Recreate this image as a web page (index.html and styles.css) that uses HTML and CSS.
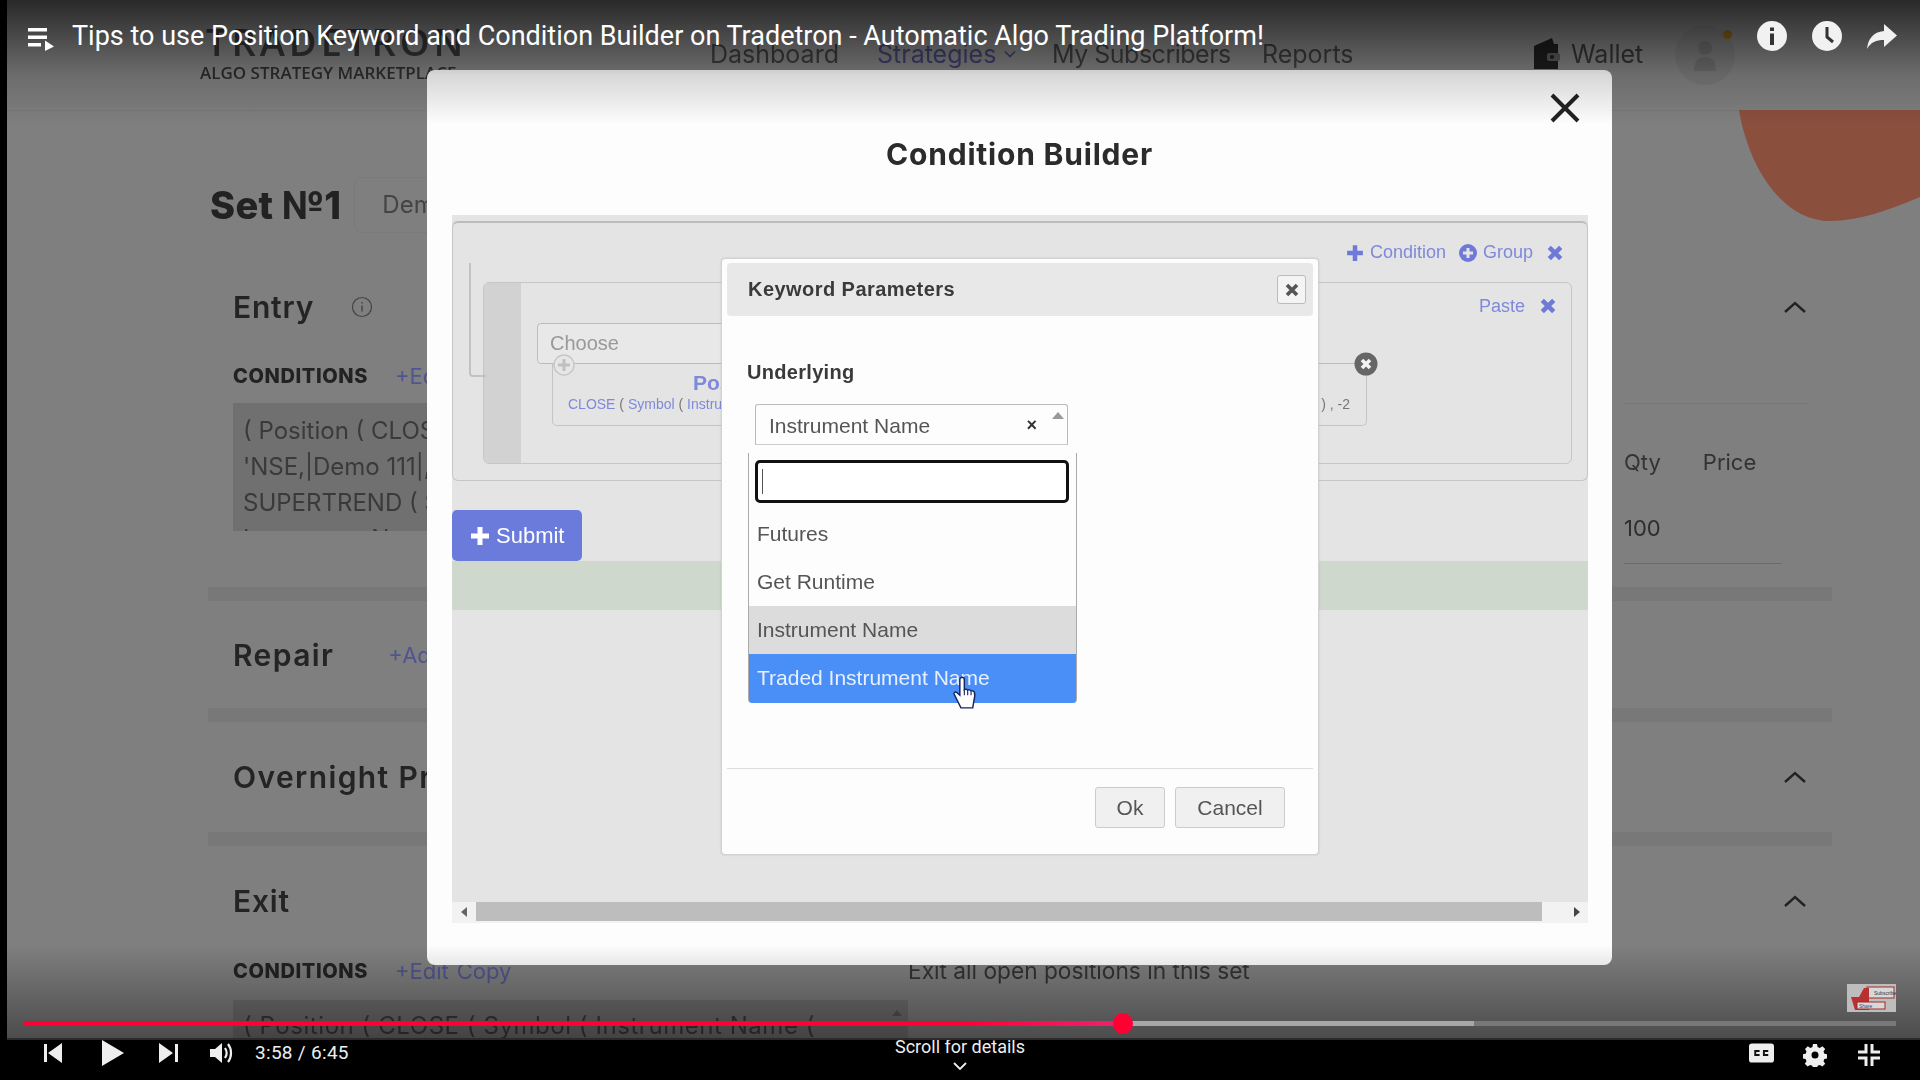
FILE: index.html
```html
<!DOCTYPE html>
<html lang="en">
<head>
<meta charset="utf-8">
<title>Tips to use Position Keyword and Condition Builder on Tradetron</title>
<link rel="stylesheet" href="styles.css">
</head>
<body>
<div class="player">
  <div class="stage">
    <div class="page">
      <header class="site-head">
        <div class="logo">
          <div class="logo-name">TRADETRON</div>
          <div class="logo-sub">ALGO STRATEGY MARKETPLACE</div>
        </div>
        <nav class="nav">
          <span>Dashboard</span>
          <span class="nav-active">Strategies <svg class="nav-chev" viewBox="0 0 12 8"><path d="M1 1.5l5 5 5-5" fill="none" stroke="#3d3f6e" stroke-width="1.6"/></svg></span>
          <span class="nav-subs">My Subscribers</span>
          <span>Reports</span>
        </nav>
        <div class="wallet">
          <svg class="wallet-ico" viewBox="0 0 28 34"><path d="M2 9L20 1l2 6h4v25H2z" fill="#1c1c1c"/><rect x="15" y="16" width="13" height="8" rx="2" fill="#555"/><circle cx="20" cy="20" r="2" fill="#1c1c1c"/></svg>
          <span>Wallet</span>
        </div>
        <div class="avatar">
          <svg viewBox="0 0 60 60"><circle cx="30" cy="23" r="7" fill="#6b6b6b"/><path d="M19 46c0-10 4-14 11-14s11 4 11 14z" fill="#6b6b6b"/></svg>
          <i class="avatar-dot"></i>
        </div>
      </header>
      <div class="set-row">
        <h2 class="set-title">Set №1</h2>
        <div class="set-input">Demo</div>
      </div>
      <section class="card card-entry">
        <div class="card-head"><h3>Entry</h3>
          <svg class="info" viewBox="0 0 22 22"><circle cx="11" cy="11" r="9.5" fill="none" stroke="#444" stroke-width="1.2"/><path d="M11 9.5v6M11 6v1.6" stroke="#444" stroke-width="1.4"/></svg>
          <svg class="chev" viewBox="0 0 24 14"><path d="M2 12L12 3l10 9" fill="none" stroke="#222" stroke-width="2.4"/></svg>
        </div>
        <div class="card-body">
          <div class="cond-col">
            <div class="cond-label"><b>CONDITIONS</b><span>+Edit</span><span>Copy</span></div>
            <div class="cond-box">( Position ( CLOSE ( Symbol (<br>'NSE,|Demo 111|,,,,,<br>SUPERTREND ( Symbol (<br>Instrument Name</div>
          </div>
          <div class="legs">
            <div class="legs-row"><span>Qty</span><span>Price</span></div>
            <div class="legs-val">100</div>
          </div>
        </div>
      </section>
      <section class="card card-repair">
        <div class="card-head head-fill"><h3>Repair</h3><span class="add">+Add</span></div>
      </section>
      <section class="card card-over">
        <div class="card-head head-over"><h3>Overnight Protection</h3>
          <svg class="chev" viewBox="0 0 24 14"><path d="M2 12L12 3l10 9" fill="none" stroke="#222" stroke-width="2.4"/></svg>
        </div>
      </section>
      <section class="card card-exit">
        <div class="card-head"><h3>Exit</h3>
          <svg class="chev" viewBox="0 0 24 14"><path d="M2 12L12 3l10 9" fill="none" stroke="#222" stroke-width="2.4"/></svg>
        </div>
        <div class="card-body">
          <div class="cond-col">
            <div class="cond-label"><b>CONDITIONS</b><span>+Edit</span><span>Copy</span></div>
            <div class="cond-box exit-box">( Position ( CLOSE ( Symbol ( Instrument Name (</div>
          </div>
          <div class="exit-note">Exit all open positions in this set</div>
        </div>
      </section>
    </div>

    <svg class="blob" viewBox="0 0 181 111"><path d="M0 0H181V87C150 100 120 111 91 111C45 111 10 60 0 0Z" fill="#8a4f3d"/></svg>

    <div class="modal">
      <div class="modal-head">
        <h1>Condition Builder</h1>
        <svg class="modal-close" viewBox="0 0 30 30"><path d="M2 2l26 26M28 2L2 28" stroke="#222" stroke-width="4"/></svg>
      </div>
      <div class="builder">
        <div class="group">
          <div class="actions">
            <svg class="act-ico" viewBox="0 0 16 16"><path d="M8 1v14M1 8h14" stroke="#6f7ad8" stroke-width="4"/></svg><span>Condition</span>
            <svg class="act-ico act-gap" viewBox="0 0 18 18"><circle cx="9" cy="9" r="9" fill="#6f7ad8"/><path d="M9 4v10M4 9h10" stroke="#e4e4e4" stroke-width="3"/></svg><span>Group</span>
            <svg class="act-x" viewBox="0 0 14 14"><path d="M2 2l10 10M12 2L2 12" stroke="#6f7ad8" stroke-width="4"/></svg>
          </div>
          <div class="inner">
            <div class="stripe"></div>
            <div class="inner-body">
              <div class="paste"><span>Paste</span>
                <svg class="act-x" viewBox="0 0 14 14"><path d="M2 2l10 10M12 2L2 12" stroke="#6f7ad8" stroke-width="4"/></svg>
              </div>
              <div class="choose">Choose</div>
              <div class="cond">
                <svg class="cond-plus" viewBox="0 0 22 22"><circle cx="11" cy="11" r="10" fill="#e6e6e6" stroke="#c6c6c6" stroke-width="1.4"/><path d="M11 5v12M5 11h12" stroke="#c0c0c0" stroke-width="3"/></svg>
                <svg class="cond-x" viewBox="0 0 24 24"><circle cx="12" cy="12" r="11.5" fill="#666"/><path d="M8 8l8 8M16 8l-8 8" stroke="#f2f2f2" stroke-width="3.6"/></svg>
                <div class="cond-title">Position</div>
                <div class="cond-line"><span class="cond-args"><em>CLOSE</em> ( <em>Symbol</em> ( <em>Instrument Name</em></span><span>) , -2</span></div>
              </div>
            </div>
          </div>
        </div>
        <button class="submit"><svg viewBox="0 0 20 20"><path d="M10 1v18M1 10h18" stroke="#fff" stroke-width="5"/></svg>Submit</button>
        <div class="notice"></div>
        <div class="builder-fill"></div>
        <div class="hscroll">
          <span class="hs-end"><i class="tri-left"></i></span>
          <span class="hs-thumb"></span>
          <span class="hs-end hs-right"><i class="tri-right"></i></span>
        </div>

        <div class="dialog">
          <div class="dialog-head">
            <span>Keyword Parameters</span>
            <span class="dialog-x"><svg viewBox="0 0 14 14"><path d="M2 2l10 10M12 2L2 12" stroke="#555" stroke-width="3.6"/></svg></span>
          </div>
          <label class="field-label">Underlying</label>
          <div class="select">
            <span>Instrument Name</span>
            <span class="select-x">×</span>
            <i class="select-arrow"></i>
          </div>
          <div class="drop">
            <div class="drop-search"><i class="caret"></i></div>
            <div class="opt">Futures</div>
            <div class="opt">Get Runtime</div>
            <div class="opt opt-sel">Instrument Name</div>
            <div class="opt opt-hover">Traded Instrument Name
              <svg class="hand" viewBox="0 0 25 30"><path d="M9 1c1.2 0 2 .8 2 2v9c.8-.6 2.5-.6 3 .5 1-.6 2.5-.4 3 .8 1-.5 2.6-.2 3 1 .3 1 .3 5-.5 8l-1 6H8l-6-12c-1-1.5 1-3 2.5-1.5L7 17V3c0-1.2.8-2 2-2z" fill="#fff" stroke="#16265f" stroke-width="1.3"/><path d="M11 12v5M14 13v4M17 14v3" stroke="#16265f" stroke-width="1"/></svg>
            </div>
          </div>
          <div class="dialog-foot">
            <button class="btn">Ok</button>
            <button class="btn btn-cancel">Cancel</button>
          </div>
        </div>
      </div>
    </div>

    <div class="yt-top">
      <svg class="yt-menu" viewBox="0 0 26 24"><path d="M0 1h19v3.4H0zM0 8.5h19v3.4H0zM0 16h13v3.4H0zM17 13.5l9 6-9 4.5z" fill="#fff"/></svg>
      <div class="yt-title">Tips to use Position Keyword and Condition Builder on Tradetron - Automatic Algo Trading Platform!</div>
      <svg class="yt-ico" viewBox="0 0 30 30"><circle cx="15" cy="15" r="15" fill="#f1f1f1"/><path d="M13 12.5h4V24h-4zM13 6.5h4v3.6h-4z" fill="#333"/></svg>
      <svg class="yt-ico" viewBox="0 0 30 30"><circle cx="15" cy="15" r="15" fill="#f1f1f1"/><path d="M15 6v10l6 5" fill="none" stroke="#333" stroke-width="3"/></svg>
      <svg class="yt-ico" viewBox="0 0 30 30"><path d="M17 3l13 11.5L17 26v-7C9 19 4 21 0 28c1-10 6-17 17-18z" fill="#f1f1f1"/></svg>
    </div>

    <div class="yt-bottom">
      <svg class="endcard" viewBox="0 0 49 28">
        <rect width="49" height="28" fill="#bdbdbd"/>
        <rect x="20" y="3" width="27" height="11" fill="#d8d8d8" stroke="#a32b2b"/>
        <text x="27" y="11" font-size="5" fill="#333" font-family="Liberation Sans">Subscribe</text>
        <path d="M4 13h8l5-9h5v22H8z" fill="#b8302f"/>
        <rect x="10" y="18" width="28" height="7" fill="#d8d8d8" stroke="#a32b2b"/>
        <text x="12" y="24" font-size="5" fill="#2b4a8a" font-family="Liberation Sans">Share</text>
      </svg>
      <div class="progress">
        <div class="prog-played"></div>
        <div class="prog-dot"></div>
        <div class="prog-loaded"></div>
        <div class="prog-rest"></div>
      </div>
    </div>
  </div>

  <div class="controls">
    <div class="ctl-left">
      <svg class="ctl-prev" viewBox="0 0 26 24"><path d="M4 3h3v18H4zM22 2v20L8 12z" fill="#eee"/></svg>
      <svg class="ctl-play" viewBox="0 0 30 26"><path d="M4 0l22 13L4 26z" fill="#eee"/></svg>
      <svg class="ctl-next" viewBox="0 0 26 24"><path d="M4 2v20l14-10zM20 3h3v18h-3z" fill="#eee"/></svg>
      <svg class="ctl-vol" viewBox="0 0 26 26"><path d="M2 9h5l7-6v20l-7-6H2z" fill="#eee"/><path d="M17 8c2 3 2 7 0 10M20 4c4 5 4 13 0 18" fill="none" stroke="#eee" stroke-width="2.2"/></svg>
      <span class="ctl-time">3:58 / 6:45</span>
    </div>
    <div class="ctl-mid">
      <span>Scroll for details</span>
      <svg viewBox="0 0 14 8"><path d="M1 1l6 6 6-6" fill="none" stroke="#eee" stroke-width="1.8"/></svg>
    </div>
    <div class="ctl-right">
      <svg class="ctl-cc" viewBox="0 0 26 20"><rect width="26" height="20" rx="3" fill="#eee"/><path d="M11 8H6.500v4H11M20 8h-4.500v4H20" fill="none" stroke="#111" stroke-width="2"/></svg>
      <svg class="ctl-gear" viewBox="0 0 24 24"><path d="M12 8.500a3.500 3.500 0 1 0 0 7 3.500 3.500 0 0 0 0-7zM10 1h4l.6 3 2.200.9 2.600-1.700 2.800 2.800-1.700 2.600.9 2.200 3 .6v4l-3 .6-.9 2.200 1.700 2.600-2.800 2.800-2.600-1.700-2.200.9-.6 3h-4l-.6-3-2.200-.9-2.600 1.700-2.800-2.800 1.700-2.600-.9-2.200-3-.6v-4l3-.6.9-2.200L2 6l2.800-2.800 2.600 1.700L9.400 4z" fill="#eee" fill-rule="evenodd"/></svg>
      <svg class="ctl-exit" viewBox="0 0 24 24"><path d="M9 1v8H1M15 1v8h8M9 23v-8H1M15 23v-8h8" fill="none" stroke="#eee" stroke-width="3"/></svg>
    </div>
  </div>
</div>
</body>
</html>
```

FILE: styles.css
```css
* { box-sizing: border-box; }
html, body { margin: 0; padding: 0; background: #000; }
h1, h2, h3 { margin: 0; }
svg { display: block; flex: none; }
em { font-style: normal; }

.player {
  position: relative;
  width: 1920px;
  height: 1080px;
  overflow: hidden;
  background: #000;
  display: grid;
  grid-template-rows: 1040px 40px;
}

.stage {
  position: relative;
  margin-left: 7px;
  overflow: hidden;
  background: #7f7f7f;
}

/* dimmed page behind the modal */
.page { filter: blur(.7px); font-family: Inter, "Liberation Sans", sans-serif; color: #2a2a2a; }

.site-head {
  height: 111px;
  padding: 22px 0 0 193px;
  display: flex;
  align-items: flex-start;
  border-bottom: 1px solid #777;
}
.logo { width: 510px; flex: none; }
.logo-name { font-family: "Open Sans", sans-serif; font-weight: 600; font-size: 38px; line-height: 38px; letter-spacing: 4px; color: #333; padding-left: 6px; }
.logo-sub { font-family: "Open Sans", sans-serif; font-weight: 600; font-size: 17px; line-height: 20px; margin-top: 3px; color: #2c2c2c; white-space: nowrap; }
.nav { display: grid; grid-template-columns: 167px 175px 210px auto; justify-content: start; font-size: 25px; line-height: 30px; padding-top: 17px; color: #3a3a3a; width: 821px; flex: none; }
.nav-active { color: #3d3f6e; display: flex; align-items: center; gap: 8px; }
.nav-subs { letter-spacing: -.5px; }
.nav-chev { width: 12px; height: 8px; }
.wallet { display: flex; align-items: center; gap: 10px; font-size: 25px; line-height: 30px; color: #333; padding-top: 15px; width: 144px; flex: none; }
.wallet-ico { width: 30px; height: 34px; }
.avatar { position: relative; width: 60px; height: 60px; margin-top: 3px; border-radius: 50%; background: #787878; }
.avatar-dot { position: absolute; top: 5px; right: 3px; width: 9px; height: 9px; border-radius: 50%; background: #8a6414; }

.set-row { height: 144px; padding: 66px 0 0 203px; display: flex; align-items: flex-start; gap: 13px; }
.set-title { font-size: 38px; font-weight: 800; line-height: 56px; color: #222; letter-spacing: .3px; }
.set-input { width: 320px; height: 56px; padding-left: 27px; border: 1px solid #7a7a7a; border-radius: 7px; font-size: 24px; line-height: 54px; color: #444; }

.card { margin-left: 201px; width: 1624px; padding: 0 25px; border-bottom: 14px solid #787878; overflow: hidden; }
.card-entry { height: 346px; }
.card-repair { height: 121px; }
.card-over { height: 124px; }
.card-exit { height: 200px; border-bottom: 0; }
.card-head { height: 104px; display: flex; align-items: center; }
.card-exit .card-head { height: 110px; }
.head-fill { height: 107px; }
.head-over { height: 110px; }
.card-head h3 { font-size: 30px; font-weight: 600; letter-spacing: .8px; color: #242424; white-space: nowrap; }
.card-repair h3, .card-over h3 { letter-spacing: 1.4px; }
.info { width: 22px; height: 22px; margin-left: 37px; }
.chev { width: 24px; height: 14px; margin-left: auto; }
.add { margin-left: 54px; font-size: 22px; color: #50558f; }

.card-body { display: flex; }
.card-exit .card-body { margin-top: -2px; }
.cond-col { width: 675px; flex: none; }
.cond-label { height: 34px; display: flex; align-items: center; gap: 8px; font-size: 22px; color: #50558f; white-space: nowrap; }
.cond-label b { width: 154px; color: #222; font-weight: 800; font-size: 20px; letter-spacing: .6px; }
.cond-box { position: relative; height: 128px; margin-top: 10px; padding: 10px 10px 0; overflow: hidden; background: #707070; font-size: 24px; line-height: 36px; color: #3a3a3a; white-space: nowrap; }
.exit-box { height: 60px; margin-top: 12px; padding-top: 8px; letter-spacing: .55px; }
.exit-box::after { content: ""; position: absolute; right: 6px; top: 10px; border: 5px solid transparent; border-top: 0; border-bottom: 6px solid #555; }
.legs { width: 183px; margin: 44px 0 0 auto; height: 160px; padding-top: 46px; border-top: 1px solid #777; }
.legs-row { display: flex; gap: 42px; font-size: 22px; line-height: 24px; color: #333; }
.legs-val { margin-top: 42px; height: 48px; font-size: 22px; line-height: 24px; color: #2d2d2d; border-bottom: 1px solid #6b6b6b; margin-right: 25px; }
.exit-note { font-size: 22.700px; line-height: 34px; color: #333; white-space: nowrap; }

.blob { position: absolute; left: 1732px; top: 110px; width: 181px; height: 111px; }

/* condition builder modal */
.modal {
  position: absolute;
  left: 420px;
  top: 70px;
  width: 1185px;
  height: 895px;
  border-radius: 8px;
  background: #fdfdfd;
  font-family: "Liberation Sans", Arial, sans-serif;
  filter: blur(.35px);
}
.modal-head { position: relative; height: 145px; padding-top: 64px; text-align: center; }
.modal-head h1 { font-family: Inter, sans-serif; font-size: 30px; line-height: 40px; font-weight: 700; letter-spacing: .8px; color: #2b2b2b; }
.modal-close { position: absolute; top: 23px; right: 32px; width: 30px; height: 30px; }

.builder { position: relative; margin: 0 24px 0 25px; height: 708px; padding-top: 6px; background: #e4e4e4; display: flex; flex-direction: column; border-top: 0; }
.group { position: relative; height: 260px; padding: 0 15px 0 30px; border: 1px solid #c6c6c6; border-top: 2px solid #bcbcbc; border-radius: 6px; }
.group::before { content: ""; position: absolute; left: 16px; top: 40px; width: 15px; height: 112px; border: solid #c2c2c2; border-width: 0 0 2px 2px; border-bottom-left-radius: 4px; }
.actions { height: 59px; display: flex; align-items: center; justify-content: flex-end; padding-right: 9px; font-size: 18px; color: #7f89d9; }
.act-ico { width: 18px; height: 18px; margin-right: 6px; }
.act-ico.act-gap { width: 18px; height: 18px; margin-left: 13px; }
.act-x { width: 16px; height: 16px; margin-left: 14px; }
.inner { height: 182px; display: flex; border: 1px solid #c6c6c6; border-radius: 6px; overflow: hidden; }
.stripe { width: 37px; flex: none; background: #d2d2d2; }
.inner-body { position: relative; flex: 1; padding-left: 16px; }
.paste { height: 40px; padding: 6px 15px 0 0; display: flex; align-items: center; justify-content: flex-end; font-size: 18px; color: #7f89d9; }
.paste .act-x { margin-left: 15px; }
.choose { width: 400px; height: 41px; padding-left: 12px; border: 1px solid #bcbcbc; border-radius: 4px; background: #e8e8e8; font-size: 20px; line-height: 38px; color: #999; }
.cond { position: relative; width: 815px; height: 63px; margin: -1px 0 0 15px; padding: 7px 15px 0; border: 1px solid #c4c4c4; border-top-color: #bcbcbc; border-radius: 0 0 5px 5px; color: #777; }
.cond-plus { position: absolute; left: 0; top: -10px; width: 22px; height: 22px; }
.cond-x { position: absolute; right: -12px; top: -12px; width: 24px; height: 24px; }
.cond-title { padding-left: 125px; font-size: 21px; line-height: 24px; font-weight: 700; color: #7f89d9; }
.cond-line { display: flex; justify-content: space-between; padding-right: 1px; font-size: 14px; line-height: 18px; }
.cond-args em { color: #7f89d9; }

.submit { width: 130px; height: 51px; margin-top: 29px; padding: 0 0 0 18px; border: 0; border-radius: 5px; background: #6b7bdc; display: flex; align-items: center; gap: 6px; color: #fff; font: 22px "Liberation Sans", Arial, sans-serif; }
.submit svg { width: 20px; height: 20px; }
.notice { height: 49px; background: #cfd8cc; }
.builder-fill { flex: 1; }
.hscroll { height: 21px; display: flex; background: #f2f2f2; align-items: flex-start; }
.hs-end { width: 24px; height: 19px; display: flex; align-items: center; justify-content: center; flex: none; }
.hs-right { width: 46px; justify-content: flex-end; padding-right: 8px; }
.hs-thumb { flex: 1; height: 19px; background: #bdbdbd; }
.tri-left { border: 5px solid transparent; border-left: 0; border-right: 6px solid #666; }
.tri-right { border: 5px solid transparent; border-right: 0; border-left: 6px solid #444; }

/* keyword parameters dialog */
.dialog { position: absolute; left: 269px; top: 43px; width: 598px; height: 597px; padding: 4px 5px; background: #fdfdfd; border: 1px solid #d2d2d2; border-radius: 4px; box-shadow: 0 0 2px rgba(0,0,0,.15); }
.dialog-head { height: 53px; padding: 0 7px 0 21px; display: flex; align-items: center; justify-content: space-between; background: #e8e8e8; border-radius: 4px; font-size: 20px; font-weight: 700; color: #3a3a3a; letter-spacing: .45px; }
.dialog-x { width: 29px; height: 29px; background: #f4f4f4; border: 1px solid #bbb; border-radius: 3px; display: flex; align-items: center; justify-content: center; }
.dialog-x svg { width: 14px; height: 14px; }
.field-label { display: block; margin: 44px 0 0 20px; font-size: 20px; line-height: 24px; font-weight: 700; color: #3a3a3a; letter-spacing: .3px; }
.select { position: relative; width: 313px; height: 41px; margin: 20px 0 0 28px; padding-left: 13px; border: 1px solid #bbb; border-bottom-color: #ccc; border-radius: 3px 3px 0 0; font-size: 21px; line-height: 41px; color: #555; }
.select-x { position: absolute; right: 30px; top: 0; font-weight: 700; font-size: 18px; color: #333; }
.select-arrow { position: absolute; right: 3px; top: 7px; border: 6px solid transparent; border-top: 0; border-bottom: 7px solid #999; }
.drop { width: 329px; margin: 8px 0 0 21px; padding-top: 7px; border: solid #aaa; border-width: 0 1px 0 1px; border-radius: 0 0 4px 4px; }
.drop-search { position: relative; width: 314px; height: 43px; margin: 0 0 7px 6px; border: 3px solid #111; border-radius: 5px; background: #fff; }
.caret { position: absolute; left: 4px; top: 6px; width: 1px; height: 25px; background: #555; }
.opt { position: relative; height: 48px; padding-left: 8px; font-size: 21px; line-height: 48px; color: #555; white-space: nowrap; }
.opt-sel { background: #dcdcdc; }
.opt-hover { height: 49px; background: #4a8ff8; color: #e6f0ff; border-radius: 0 0 3px 3px; }
.hand { position: absolute; left: 203px; top: 22px; width: 28px; height: 34px; }
.dialog-foot { margin-top: 65px; padding: 18px 28px 0 0; display: flex; justify-content: flex-end; gap: 10px; border-top: 1px solid #dedede; }
.btn { width: 70px; height: 41px; padding: 0; background: #f0f0f0; border: 1px solid #ccc; border-radius: 3px; font: 21px "Liberation Sans", Arial, sans-serif; color: #555; }
.btn-cancel { width: 110px; }

/* player chrome */
.yt-top {
  position: absolute;
  inset: 0 0 auto 0;
  height: 125px;
  padding: 21px 23px 0 21px;
  display: flex;
  align-items: flex-start;
  background: linear-gradient(to bottom, rgba(0,0,0,.68) 0, rgba(0,0,0,.5) 25px, rgba(0,0,0,.15) 75px, rgba(0,0,0,0) 125px);
}
.yt-menu { width: 26px; height: 24px; margin-top: 6px; }
.yt-title { flex: 1; margin-left: 18px; font-family: Roboto, sans-serif; font-size: 27px; line-height: 30px; color: #fff; white-space: nowrap; }
.yt-ico { width: 30px; height: 30px; margin-left: 25px; }

.yt-bottom {
  position: absolute;
  left: 0; right: 0; bottom: 0;
  height: 95px;
  padding: 0 24px 12px 0;
  display: flex;
  flex-direction: column;
  align-items: flex-end;
  justify-content: flex-end;
  background: linear-gradient(to bottom, rgba(0,0,0,0) 0, rgba(0,0,0,.4) 100%);
  border-bottom: 2px solid #2a2a2a;
}
.endcard { width: 49px; height: 28px; margin: 0 0 9px; }
.progress { position: relative; width: 1872px; height: 5px; display: flex; align-self: flex-end; }
.prog-played { width: 1099px; flex: none; background: linear-gradient(to right, #ff0033 85%, #f02070 100%); }
.prog-dot { position: absolute; left: 1089px; top: -8px; width: 20px; height: 21px; border-radius: 50%; background: #ff0033; }
.prog-loaded { width: 351px; flex: none; background: #a8a8a8; }
.prog-rest { flex: 1; background: #787878; }

.controls { display: grid; grid-template-columns: 1fr auto 1fr; background: #000; color: #eee; font-family: Roboto, sans-serif; }
.ctl-left { display: flex; align-items: flex-start; padding-left: 40px; }
.ctl-prev, .ctl-next { width: 26px; height: 24px; margin-top: 1px; }
.ctl-play { width: 30px; height: 26px; margin-left: 32px; }
.ctl-next { margin-left: 27px; }
.ctl-vol { width: 26px; height: 26px; margin-left: 27px; }
.ctl-time { margin-left: 21px; font-size: 19px; line-height: 26px; letter-spacing: .3px; }
.ctl-mid { display: flex; flex-direction: column; align-items: center; font-size: 18px; line-height: 14px; }
.ctl-mid svg { width: 14px; height: 8px; margin-top: 8px; }
.ctl-right { display: flex; justify-content: flex-end; align-items: flex-start; padding: 3px 39px 0 0; }
.ctl-cc { width: 25px; height: 20px; }
.ctl-gear { width: 24px; height: 24px; margin-left: 29px; }
.ctl-exit { width: 24px; height: 24px; margin-left: 30px; }
```
